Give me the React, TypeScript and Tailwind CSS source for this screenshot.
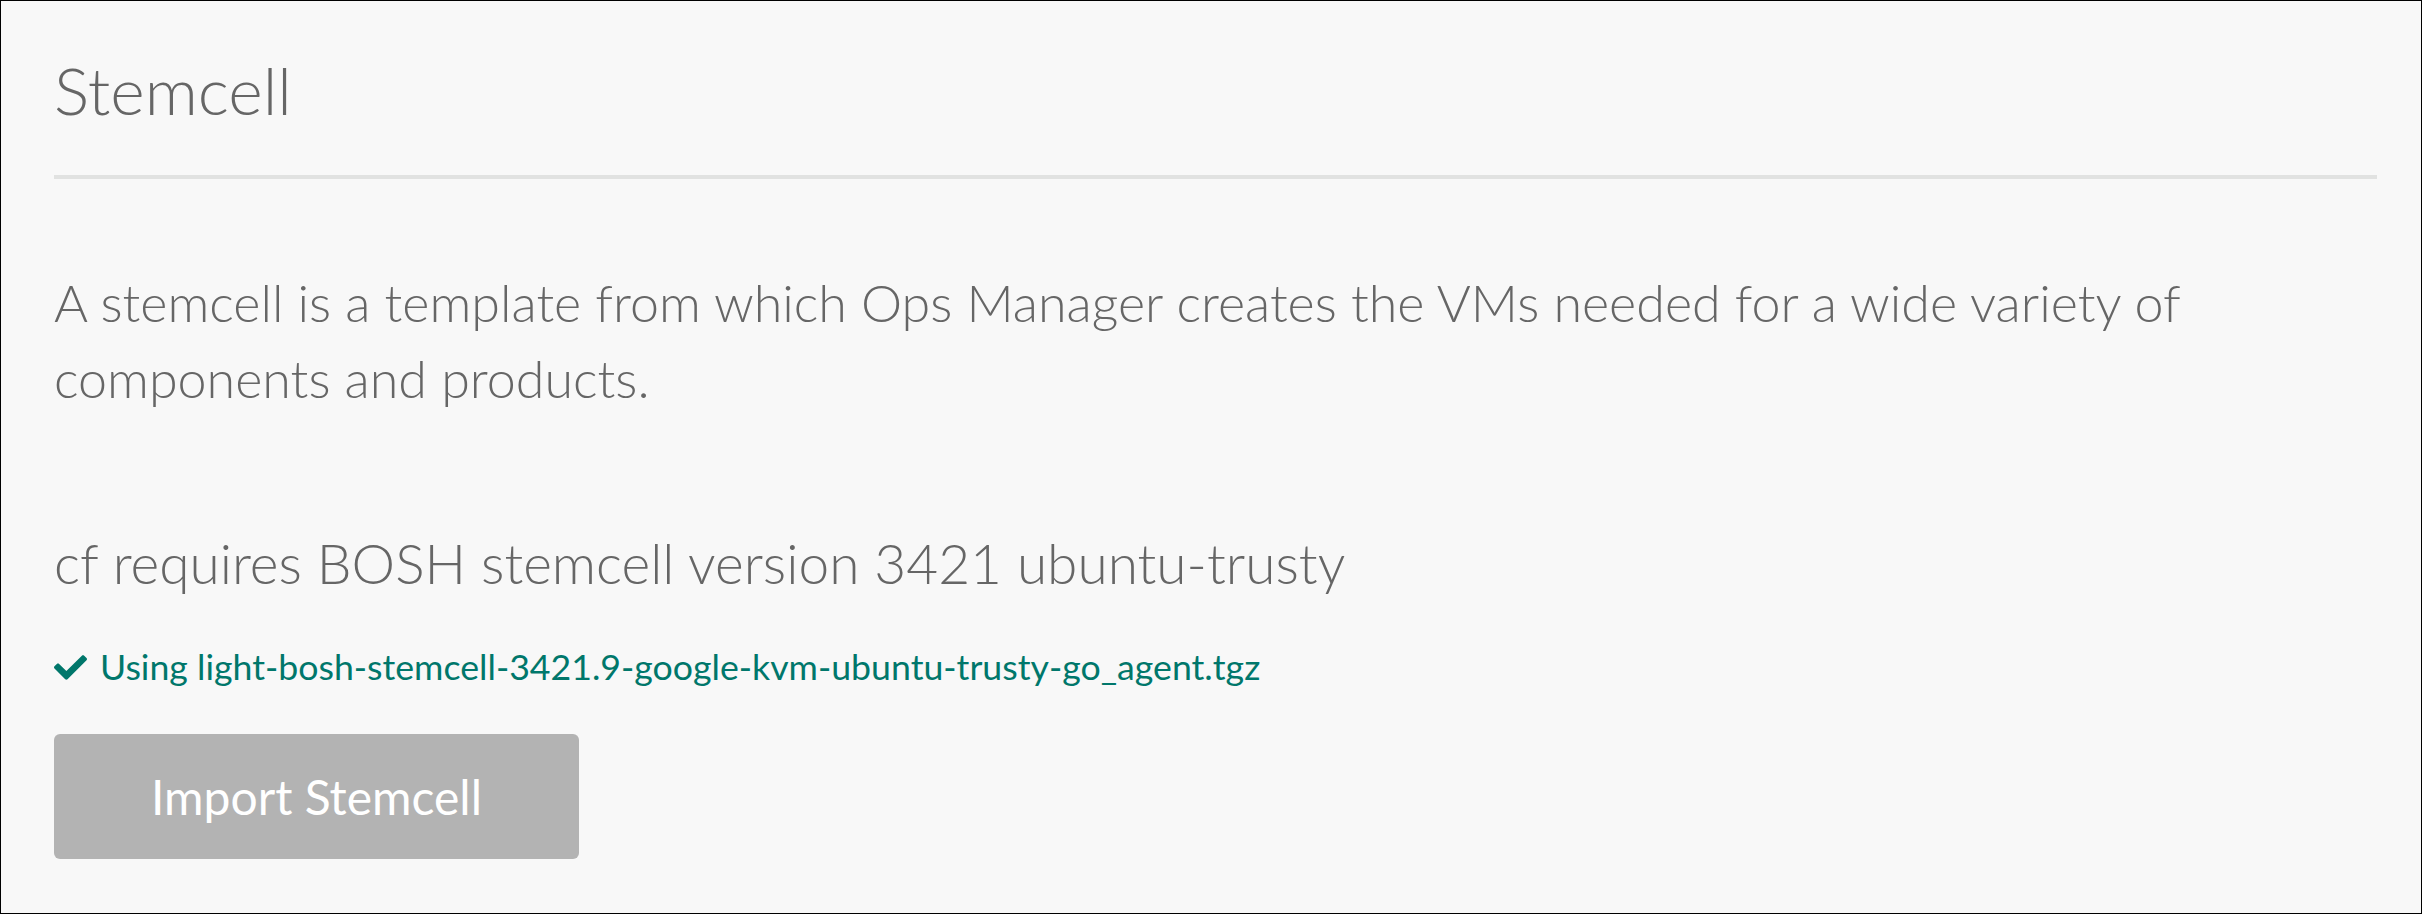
function CheckIcon() {
  // solid check mark, same outline as Font Awesome's "check"
  return (
    <svg viewBox="0 66 512 381" className="h-[25px] w-[33px] shrink-0 fill-[#00776b]">
      <path d="M173.898 439.404l-166.4-166.4c-9.997-9.997-9.997-26.206 0-36.204l36.203-36.204c9.997-9.998 26.207-9.998 36.204 0L192 312.69 432.095 72.596c9.997-9.997 26.207-9.997 36.204 0l36.203 36.204c9.997 9.997 9.997 26.206 0 36.204l-294.4 294.401c-9.998 9.997-26.207 9.997-36.204-.001z" />
    </svg>
  );
}

export default function App() {
  return (
    <div className="h-[914px] w-full border border-black bg-[#f8f8f8] pl-[53px] pr-[44px] pt-[55px] font-['Lato','Liberation_Sans',sans-serif] text-[#666]">
      <h1 className="text-[66px] font-light leading-[68px]">Stemcell</h1>
      <div className="mt-[51px] h-[4px] bg-[#e1e2e1]" />

      <p className="mt-[85px] text-[52px] font-light leading-[76px]">
        A stemcell is a template from which Ops Manager creates the VMs needed for a wide variety of
        components and products.
      </p>

      <h3 className="mt-[109px] text-[55px] font-light leading-[76px]">
        cf requires BOSH stemcell version 3421 ubuntu-trusty
      </h3>

      <div className="mt-[41px] flex items-center gap-[13px] text-[35.7px] leading-[50px] text-[#00776b]">
        <CheckIcon />
        <span>Using light-bosh-stemcell-3421.9-google-kvm-ubuntu-trusty-go_agent.tgz</span>
      </div>

      <button
        type="button"
        disabled
        className="mt-[42px] flex h-[125px] w-[525px] items-center justify-center rounded-[6px] bg-[#b3b3b3] text-[48px] text-white"
      >
        Import Stemcell
      </button>
    </div>
  );
}
